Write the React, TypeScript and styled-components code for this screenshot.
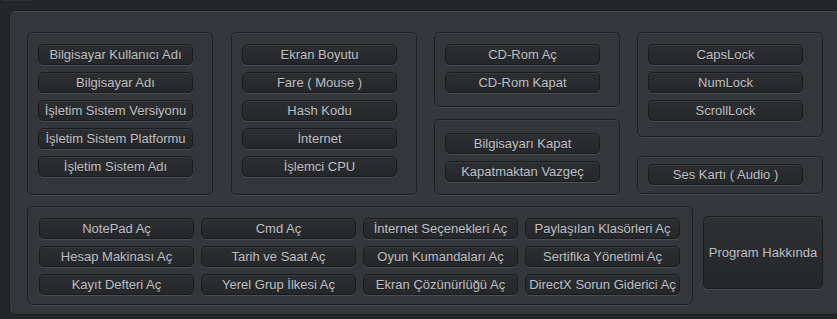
import styled, { createGlobalStyle } from 'styled-components'

const GlobalStyle = createGlobalStyle`
  html, body {
    margin: 0;
    padding: 0;
    background: #25262a;
    font-family: 'Liberation Sans', Arial, sans-serif;
  }
`

const leftInfo = [
  'Bilgisayar Kullanıcı Adı',
  'Bilgisayar Adı',
  'İşletim Sistem Versiyonu',
  'İşletim Sistem Platformu',
  'İşletim Sistem Adı',
]

const hardware = ['Ekran Boyutu', 'Fare ( Mouse )', 'Hash Kodu', 'İnternet', 'İşlemci CPU']

const tools = [
  'NotePad Aç',
  'Cmd Aç',
  'İnternet Seçenekleri Aç',
  'Paylaşılan Klasörleri Aç',
  'Hesap Makinası Aç',
  'Tarih ve Saat Aç',
  'Oyun Kumandaları Aç',
  'Sertifika Yönetimi Aç',
  'Kayıt Defteri Aç',
  'Yerel Grup İlkesi Aç',
  'Ekran Çözünürlüğü Aç',
  'DirectX Sorun Giderici Aç',
]

function App() {
  return (
    <>
      <GlobalStyle />
      <Tab />
      <Panel>
        <TopRow>
          <Group $height={163} $top={11}>
            {leftInfo.map(t => (
              <Button key={t}>{t}</Button>
            ))}
          </Group>
          <Group $height={163} $top={11}>
            {hardware.map(t => (
              <Button key={t}>{t}</Button>
            ))}
          </Group>
          <Column $gap={12} $shift={-1}>
            <Group $height={75} $top={11}>
              <Button>CD-Rom Aç</Button>
              <Button>CD-Rom Kapat</Button>
            </Group>
            <Group $height={76} $top={13}>
              <Button>Bilgisayarı Kapat</Button>
              <Button>Kapatmaktan Vazgeç</Button>
            </Group>
          </Column>
          <Column $gap={19} $shift={-1}>
            <Group $height={105} $top={11}>
              <Button>CapsLock</Button>
              <Button>NumLock</Button>
              <Button>ScrollLock</Button>
            </Group>
            <Group $height={38} $top={7}>
              <Button>Ses Kartı ( Audio )</Button>
            </Group>
          </Column>
        </TopRow>
        <BottomRow>
          <ToolGroup>
            {tools.map(t => (
              <Button key={t}>{t}</Button>
            ))}
          </ToolGroup>
          <BigButton>Program Hakkında</BigButton>
        </BottomRow>
      </Panel>
    </>
  )
}

const Tab = styled.div`
  width: 33px;
  height: 3px;
  background: #2c2d31;
  border: 1px solid #1c1d20;
  border-top: none;
  border-radius: 0 0 4px 4px;
  box-sizing: border-box;
`

const Panel = styled.div`
  margin: 7px 0 0 9px;
  width: 832px;
  height: 305px;
  box-sizing: border-box;
  background: #36373c;
  border: 1px solid #1d1e21;
  border-radius: 6px;
  box-shadow: inset 0 1px 0 #45464b;
  padding: 21px 0 0 17px;
  display: flex;
  flex-direction: column;
  gap: 11px;
`

const TopRow = styled.div`
  display: flex;
  gap: 18px;
  align-items: flex-start;
`

const Column = styled.div<{ $gap: number; $shift?: number }>`
  display: flex;
  flex-direction: column;
  gap: ${p => p.$gap}px;
  margin-left: ${p => p.$shift ?? 0}px;
`

const Group = styled.div<{ $height: number; $top: number }>`
  width: 186px;
  height: ${p => p.$height}px;
  box-sizing: border-box;
  background: #35363b;
  border: 1px solid #1e1f22;
  border-radius: 5px;
  box-shadow: 0 1px 0 #47484d, inset 0 1px 0 #3f4045;
  padding: ${p => p.$top}px 0 0 10px;
  display: flex;
  flex-direction: column;
  gap: 7px;
`

const Button = styled.button`
  width: 155px;
  height: 21px;
  box-sizing: border-box;
  padding: 0;
  margin: 0;
  background: linear-gradient(#2d2e32, #26272b);
  border: 1px solid #1a1b1e;
  border-radius: 5px;
  box-shadow: 0 1px 0 #4c4d52, inset 0 1px 0 #38393e;
  color: #bfc0c4;
  font-family: 'Liberation Sans', Arial, sans-serif;
  font-size: 13px;
  line-height: 19px;
  text-align: center;
  white-space: nowrap;
  overflow: hidden;
  text-shadow: 0 1px 0 rgba(0, 0, 0, 0.35);
  cursor: pointer;

  &:hover {
    background: linear-gradient(#35363b, #2a2b2f);
  }
`

const BottomRow = styled.div`
  display: flex;
  gap: 10px;
  align-items: flex-start;
`

const ToolGroup = styled.div`
  width: 666px;
  height: 99px;
  box-sizing: border-box;
  background: #35363b;
  border: 1px solid #1e1f22;
  border-radius: 5px;
  box-shadow: 0 1px 0 #47484d, inset 0 1px 0 #3f4045;
  padding: 11px 0 0 11px;
  display: grid;
  grid-template-columns: repeat(4, 155px);
  grid-auto-rows: 21px;
  column-gap: 7px;
  row-gap: 7px;
`

const BigButton = styled(Button)`
  width: 120px;
  height: 73px;
  margin-top: 10px;
  line-height: normal;
  background: linear-gradient(#2f3034, #25262a);
`

export default App
